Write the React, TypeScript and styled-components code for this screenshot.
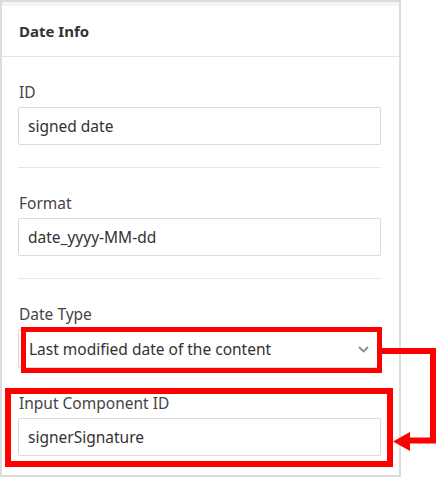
import styled, { createGlobalStyle } from "styled-components";

const GlobalStyle = createGlobalStyle`
  * {
    box-sizing: border-box;
  }

  body {
    margin: 0;
    background: #ffffff;
    font-family: "Noto Sans", "Open Sans", sans-serif;
  }
`;

const fields = [
  { label: "ID", value: "signed date" },
  { label: "Format", value: "date_yyyy-MM-dd" },
];

export default function App() {
  return (
    <Page>
      <GlobalStyle />
      <Panel>
        <Header>Date Info</Header>
        <Body>
          {fields.map((f) => (
            <Field key={f.label} $divided>
              <Label>{f.label}</Label>
              <TextBox value={f.value} readOnly />
            </Field>
          ))}

          <Field>
            <Label>Date Type</Label>
            <SelectBox>
              <span>Last modified date of the content</span>
              <svg width="11" height="7" viewBox="0 0 11 7">
                <path
                  d="M1 1l4.5 4.5L10 1"
                  fill="none"
                  stroke="#8a8a8a"
                  strokeWidth="1.8"
                />
              </svg>
            </SelectBox>
          </Field>

          <Field>
            <Label>Input Component ID</Label>
            <TextBox value="signerSignature" readOnly />
          </Field>
        </Body>
      </Panel>

      <Annotation width="437" height="477" viewBox="0 0 437 477">
        <rect
          x="23.5"
          y="329.5"
          width="356"
          height="41"
          fill="none"
          stroke="#ff0000"
          strokeWidth="5"
        />
        <rect
          x="8"
          y="391"
          width="382"
          height="73"
          fill="none"
          stroke="#ff0000"
          strokeWidth="6"
        />
        <path
          d="M382 351H433V440.5H408"
          fill="none"
          stroke="#ff0000"
          strokeWidth="6"
        />
        <path d="M393 441.5L410 432V451Z" fill="#ff0000" />
      </Annotation>
    </Page>
  );
}

const Page = styled.div`
  position: relative;
  width: 437px;
  height: 477px;
`;

const Panel = styled.div`
  width: 401px;
  height: 477px;

  display: flex;
  flex-direction: column;

  border: 2px solid #dcdcdc;
  background-color: #ffffff;
`;

const Header = styled.div`
  height: 55px;
  flex-shrink: 0;

  display: flex;
  align-items: center;

  padding: 0 17px;
  border-top: 4px solid #f4f4f4;
  border-bottom: 1px solid #e3e3e3;

  font-size: 15px;
  font-weight: 700;
  color: #333333;
`;

const Body = styled.div`
  display: flex;
  flex-direction: column;

  padding: 0 18px 0 16px;
`;

const Field = styled.div<{ $divided?: boolean }>`
  display: flex;
  flex-direction: column;
  gap: 5px;

  margin-top: 25px;

  ${(p) =>
    p.$divided &&
    `
    padding-bottom: 22px;
    border-bottom: 1px solid #e6e6e6;
  `}
`;

const Label = styled.div`
  height: 20px;
  line-height: 20px;

  padding-left: 1px;

  font-size: 15.5px;
  color: #444444;
`;

const TextBox = styled.input`
  width: 100%;
  height: 38px;

  padding: 0 9px;
  border: 1px solid #dadada;
  border-radius: 2px;
  outline: none;

  font-family: inherit;
  font-size: 15.5px;
  color: #333333;
  background-color: #ffffff;
`;

const SelectBox = styled.div`
  width: 100%;
  height: 39px;

  display: flex;
  align-items: center;
  justify-content: space-between;

  padding: 0 11px 0 10px;
  border: 1px solid #dadada;
  border-radius: 2px;

  font-size: 15.5px;
  color: #333333;

  svg {
    margin-top: 1px;
  }
`;

const Annotation = styled.svg`
  position: absolute;
  top: 0;
  left: 0;

  pointer-events: none;
`;
